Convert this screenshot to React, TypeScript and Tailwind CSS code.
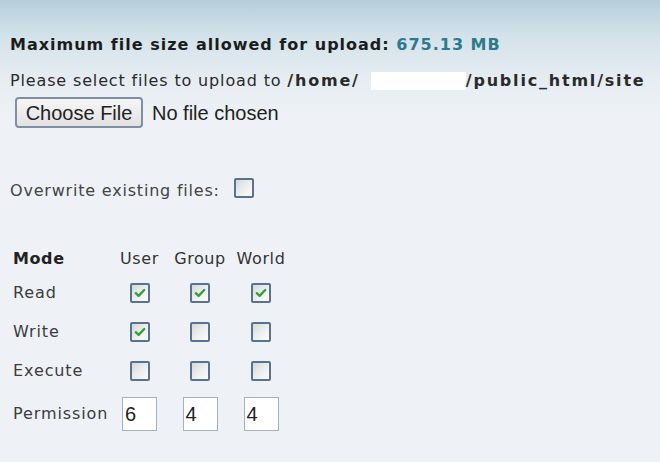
import React from "react";

function Check() {
  return (
    <svg width="12" height="10" viewBox="0 0 12 10" className="block">
      <path d="M1.8 5.2 L4.6 7.8 L10.2 2" fill="none" stroke="#35a038" strokeWidth="2.4" strokeLinecap="round" strokeLinejoin="round" />
    </svg>
  );
}

function Box({ checked }: { checked?: boolean }) {
  return (
    <div className="w-[20px] h-[20px] border-2 border-[#5a7290] rounded-[2px] bg-[linear-gradient(135deg,#d4d8da_0%,#eef0f0_55%,#fbfbfb_100%)] flex items-center justify-center">
      {checked ? <Check /> : null}
    </div>
  );
}

function Num({ v }: { v: string }) {
  return (
    <div className="w-[35px] h-[34px] border border-[#a3b0be] bg-white flex items-center pl-[2px] text-[20px] text-[#222] font-['Liberation_Sans',Arial,sans-serif]">
      {v}
    </div>
  );
}

const rowLabel = "text-[16px] tracking-[0.9px] text-[#3c3c3c]";

export default function App() {
  const rows: { label: string; c: boolean[] }[] = [
    { label: "Read", c: [true, true, true] },
    { label: "Write", c: [true, false, false] },
    { label: "Execute", c: [false, false, false] },
  ];
  return (
    <div className="w-[660px] h-[462px] overflow-hidden bg-[linear-gradient(to_bottom,#b5cedb_0px,#d3e2ea_35px,#e6edf2_80px,#eef2f6_120px,#eef2f6_100%)] font-['DejaVu_Sans',Verdana,sans-serif]">
      <div className="pl-[10px] pt-[34px]">
        <div className="leading-[22px] text-[16px] font-bold tracking-[1px] text-[#1c1c1c] whitespace-nowrap">
          Maximum file size allowed for upload: <span className="text-[#2d7a8c]">675.13 MB</span>
        </div>
        <div className="mt-[14px] leading-[22px] text-[16px] tracking-[0.85px] text-[#2a2a2a] flex items-center whitespace-nowrap">
          <span>Please select files to upload to&nbsp;</span>
          <span className="font-bold tracking-[1.8px]">/home/</span>
          <span className="w-[95px] h-[18px] bg-white ml-[11px]" />
          <span className="font-bold tracking-[1.8px]">/public_html/site</span>
        </div>
        <div className="mt-[5px] ml-[5px] flex items-center gap-[9px] font-['Liberation_Sans',Arial,sans-serif] text-[20px] text-[#222]">
          <div className="w-[128px] h-[31px] border-2 border-[#7f8ea3] rounded-[4px] bg-[linear-gradient(to_bottom,#f6f6f6,#e2e2e2)] flex items-center justify-center leading-none">
            Choose File
          </div>
          <span>No file chosen</span>
        </div>
        <div className="mt-[49px] h-[22px] flex items-center gap-[14px]">
          <span className="pt-[6px] text-[16px] tracking-[0.8px] text-[#444]">Overwrite existing files:</span>
          <Box />
        </div>
      </div>
      <div className="ml-[13px] mt-[46px] grid grid-cols-[97px_59px_62px_60px]">
        <div className="h-[28px] flex items-center text-[16px] font-bold tracking-[0.6px] text-[#222]">Mode</div>
        {["User", "Group", "World"].map((h) => (
          <div key={h} className="h-[28px] flex items-center justify-center text-[16px] tracking-[0.6px] text-[#333]">
            {h}
          </div>
        ))}
        {rows.map((r) => (
          <React.Fragment key={r.label}>
            <div className={"h-[39px] flex items-center " + rowLabel}>{r.label}</div>
            {r.c.map((c, i) => (
              <div key={i} className="h-[39px] flex items-center justify-center">
                <Box checked={c} />
              </div>
            ))}
          </React.Fragment>
        ))}
        <div className={"h-[47px] flex items-center " + rowLabel}>Permission</div>
        {["6", "4", "4"].map((v, i) => (
          <div key={i} className="h-[47px] flex items-center justify-center">
            <Num v={v} />
          </div>
        ))}
      </div>
    </div>
  );
}
